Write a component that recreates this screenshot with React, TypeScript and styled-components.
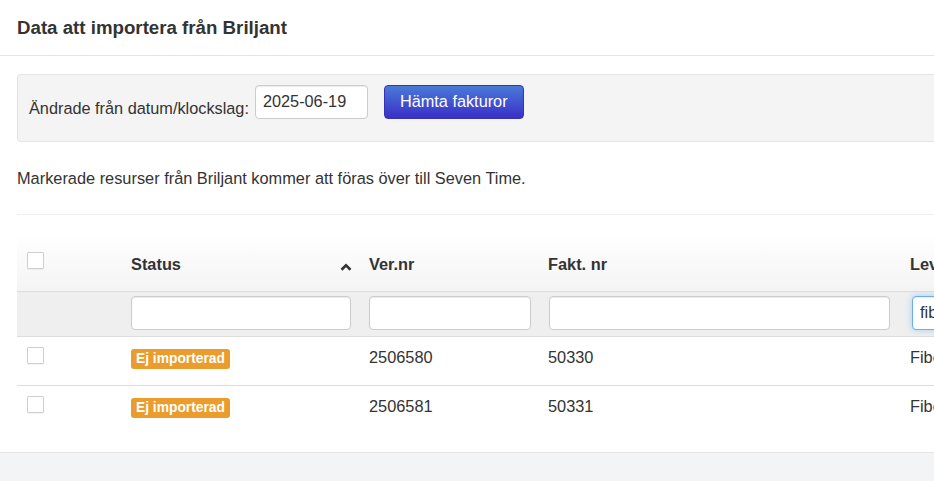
import React from "react";
import styled, { createGlobalStyle } from "styled-components";

const Global = createGlobalStyle`
  html, body { margin: 0; padding: 0; background: #ffffff; }
  body {
    font-family: "Liberation Sans", Arial, Helvetica, sans-serif;
    font-size: 16.35px;
    color: #333333;
    overflow: hidden;
  }
  #root { width: 934px; height: 481px; overflow: hidden; }
`;

const Modal = styled.div`
  width: 1300px;
  background: #ffffff;
  display: flex;
  flex-direction: column;
`;

const Header = styled.div`
  padding: 15px 17px 15px 17px;
  border-bottom: 1px solid #e5e5e5;
`;

const Title = styled.h4`
  margin: 0;
  font-size: 18.7px;
  font-weight: 700;
  line-height: 25px;
  color: #333333;
`;

const Body = styled.div`
  padding: 18px 17px 18px 17px;
`;

const Well = styled.div`
  background: #f4f4f4;
  border: 1px solid #e3e3e3;
  border-radius: 4px;
  padding: 10px 11px 22px 11px;
  display: flex;
  align-items: flex-start;
`;

const Label = styled.label`
  font-size: 16.3px;
  line-height: 22px;
  margin-top: 12px;
  margin-right: 6px;
`;

const TextInput = styled.input<{ $w?: number; $focus?: boolean }>`
  box-sizing: border-box;
  height: 34px;
  width: ${(p) => (p.$w ? `${p.$w}px` : "100%")};
  padding: 0 7px;
  font-family: "Liberation Sans", Arial, sans-serif;
  font-size: 16.3px;
  color: #333333;
  background: #ffffff;
  border: 1px solid ${(p) => (p.$focus ? "#66afe9" : "#cccccc")};
  border-radius: 4px;
  box-shadow: ${(p) =>
    p.$focus
      ? "inset 0 1px 1px rgba(0,0,0,.075), 0 0 6px rgba(102,175,233,.5)"
      : "inset 0 1px 1px rgba(0,0,0,.075)"};
  outline: none;
`;

const DateInput = styled(TextInput)`
  padding: 0 7px 2px 7px;
`;

const PrimaryButton = styled.button`
  box-sizing: border-box;
  height: 34px;
  margin-left: 16px;
  padding: 0 15px 2px 15px;
  font-family: "Liberation Sans", Arial, sans-serif;
  font-size: 16.3px;
  color: #ffffff;
  background: linear-gradient(to bottom, #4a7ad8 0%, #3a2fc6 100%);
  border: 1px solid #3532b4;
  border-radius: 4px;
  cursor: pointer;
`;

const Info = styled.p`
  margin: 25px 0 0 0;
  line-height: 22px;
`;

const Rule = styled.hr`
  border: 0;
  border-top: 1px solid #eeeeee;
  margin: 25px 0 18px 0;
`;

const Table = styled.table`
  width: 1250px;
  border-collapse: collapse;
  table-layout: fixed;
`;

const HeadRow = styled.tr`
  background: linear-gradient(to bottom, #ffffff 0%, #f4f4f4 100%);
  height: 58px;
`;

const Th = styled.th<{ $w?: number }>`
  box-sizing: border-box;
  width: ${(p) => (p.$w ? `${p.$w}px` : "auto")};
  text-align: left;
  font-weight: 700;
  line-height: 22px;
  padding: 5px 8px 0 8px;
  vertical-align: middle;
  white-space: nowrap;
  overflow: hidden;
`;

const ThInner = styled.div`
  display: flex;
  align-items: center;
  justify-content: space-between;
`;

const CheckCell = styled.div<{ $head?: boolean }>`
  padding-left: 2px;
  margin-bottom: ${(p) => (p.$head ? "7px" : "0")};
  display: flex;
`;

const Check = styled.span`
  box-sizing: border-box;
  width: 17px;
  height: 17px;
  border: 1px solid #cfcfcf;
  border-radius: 1px;
  background: #ffffff;
  box-shadow: 0 1px 1px rgba(0, 0, 0, 0.05);
  display: inline-block;
`;

const FilterRow = styled.tr`
  background: #efefef;
  border-top: 1px solid #dddddd;
  border-bottom: 1px solid #dddddd;
`;

const FilterTd = styled.td<{ $padLeft?: number; $padRight?: number }>`
  box-sizing: border-box;
  padding: 4px ${(p) => p.$padRight ?? 8}px 6px ${(p) => p.$padLeft ?? 8}px;
  vertical-align: top;
`;

const DataRow = styled.tr<{ $last?: boolean }>`
  height: 49px;
  border-bottom: ${(p) => (p.$last ? "none" : "1px solid #dddddd")};
`;

const Td = styled.td`
  box-sizing: border-box;
  padding: 10px 8px 0 8px;
  vertical-align: top;
  line-height: 20px;
  white-space: nowrap;
  overflow: hidden;
`;

const Badge = styled.span`
  display: inline-block;
  background: #ea9c2c;
  color: #ffffff;
  font-weight: 700;
  font-size: 13.8px;
  line-height: 20px;
  padding: 0 5px;
  border-radius: 3px;
  margin-top: 1px;
`;

const Footer = styled.div`
  border-top: 1px solid #e5e5e5;
  background: #f3f4f5;
  height: 60px;
`;

const SortIcon = () => (
  <svg width="12" height="8" viewBox="0 0 12 8" style={{ marginRight: 1, marginTop: 5 }}>
    <path d="M1.5 6.8 L6 2.4 L10.5 6.8" fill="none" stroke="#333" strokeWidth="2.6" />
  </svg>
);

const rows = [
  { ver: "2506580", fakt: "50330", lev: "Fiber Sverige AB" },
  { ver: "2506581", fakt: "50331", lev: "Fiber Sverige AB" },
];

export default function App() {
  return (
    <>
      <Global />
      <Modal>
        <Header>
          <Title>Data att importera från Briljant</Title>
        </Header>
        <Body>
          <Well>
            <Label>Ändrade från datum/klockslag:</Label>
            <DateInput $w={113} defaultValue="2025-06-19" />
            <PrimaryButton>Hämta fakturor</PrimaryButton>
          </Well>
          <Info>Markerade resurser från Briljant kommer att föras över till Seven Time.</Info>
          <Rule />
          <Table>
            <thead>
              <HeadRow>
                <Th $w={106}>
                  <CheckCell $head>
                    <Check />
                  </CheckCell>
                </Th>
                <Th $w={238}>
                  <ThInner>
                    <span>Status</span>
                    <SortIcon />
                  </ThInner>
                </Th>
                <Th $w={179}>Ver.nr</Th>
                <Th $w={362}>Fakt. nr</Th>
                <Th>Leverantör</Th>
              </HeadRow>
              <FilterRow>
                <FilterTd />
                <FilterTd $padRight={10}>
                  <TextInput />
                </FilterTd>
                <FilterTd $padRight={9}>
                  <TextInput />
                </FilterTd>
                <FilterTd $padLeft={9} $padRight={12}>
                  <TextInput />
                </FilterTd>
                <FilterTd $padLeft={10}>
                  <TextInput $focus defaultValue="fiber" />
                </FilterTd>
              </FilterRow>
            </thead>
            <tbody>
              {rows.map((r, i) => (
                <DataRow key={r.ver} $last={i === rows.length - 1}>
                  <Td>
                    <CheckCell>
                      <Check />
                    </CheckCell>
                  </Td>
                  <Td>
                    <Badge>Ej importerad</Badge>
                  </Td>
                  <Td>{r.ver}</Td>
                  <Td>{r.fakt}</Td>
                  <Td>{r.lev}</Td>
                </DataRow>
              ))}
            </tbody>
          </Table>
        </Body>
        <Footer />
      </Modal>
    </>
  );
}
